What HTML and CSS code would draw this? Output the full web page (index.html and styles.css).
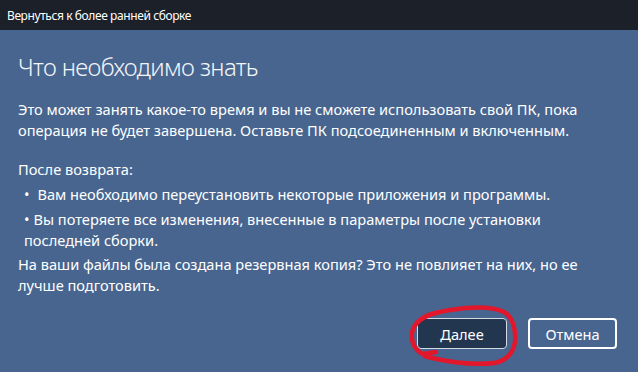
FILE: index.html
```html
<!DOCTYPE html>
<html>
<head>
    <title>Вернуться к более ранней сборке</title>
    <link rel="stylesheet" href="styles.css">
</head>
<body>
    <div id="window">
        <div class="titlebar">Вернуться к более ранней сборке</div>
        <div class="content">
            <h1>Что необходимо знать</h1>
            <div class="text">
                <p class="intro">Это может занять какое-то время и вы не сможете использовать свой ПК, пока операция не будет завершена. Оставьте ПК подсоединенным и включенным.</p>

                <p class="label">После возврата:</p>
                <ul class="notes">
                    <li class="first">Вам необходимо переустановить некоторые приложения и программы.</li>
                    <li class="second">Вы потеряете все изменения, внесенные в параметры после установки последней сборки.</li>
                </ul>
                <p class="backup">На ваши файлы была создана резервная копия? Это не повлияет на них, но ее лучше подготовить.</p>
            </div>

            <div class="actions">
                <div class="next-wrap">
                    <button type="button" class="btn primary">Далее</button>
                    <!-- red marker scribble over the button -->
                    <svg class="scribble" width="125" height="68" viewBox="0 0 125 68">
                        <path d="M36 52 C28 53 22 55 21 53 C13 48 10 38 13 29 C17 19 30 13 50 10 C70 7 92 6 104 12 C113 17 116 30 115 42 C113 54 106 61 94 63 C76 65 52 63 28 57 C24 56 23 55 26 55"
                              fill="none" stroke="#e3172b" stroke-width="4.5" stroke-linecap="round" stroke-linejoin="round"/>
                        <path d="M14 27 C20 17 28 14 40 12"
                              fill="none" stroke="#e3172b" stroke-width="4" stroke-linecap="round"/>
                    </svg>
                </div>
                <button type="button" class="btn">Отмена</button>
            </div>
        </div>
    </div>
</body>
</html>
```

FILE: styles.css
```css
body {
    margin: 0;
    padding: 0;
    font-family: "Noto Sans", "Liberation Sans", sans-serif;
    background-color: #47658f;
}

#window {
    width: 638px;
    height: 372px;
    overflow: hidden;
}

.titlebar {
    height: 30px;
    line-height: 31px;
    padding-left: 7px;
    background-color: #1c2028;
    color: #ffffff;
    font-size: 12px;
    letter-spacing: -0.4px;
}

.content {
    padding: 19px 0 0 18px;
    color: #ffffff;
}

h1 {
    margin: 0 0 14px 0;
    font-size: 24px;
    font-weight: 300;
    letter-spacing: -0.65px;
    line-height: 36px;
    color: #f3f5f8;
}

.text {
    width: 580px;
    font-size: 14.6px;
    line-height: 21px;
}

p {
    margin: 0;
}

.intro {
    margin-bottom: 18px;
}

.label {
    margin-bottom: 4px;
}

.notes {
    list-style: none;
    margin: 0;
    padding: 0 0 0 6px;
}

.notes li {
    margin-bottom: 4px;
}

.notes li.second {
    margin-bottom: 3px;
}

.notes li::before {
    content: "\2022";
}

.notes .first::before {
    margin-right: 8px;
}

.notes .second::before {
    margin-right: 4px;
}

.actions {
    display: flex;
    justify-content: flex-end;
    gap: 21px;
    margin-top: 22px;
    padding-right: 21px;
}

.next-wrap {
    position: relative;
}

.btn {
    width: 89px;
    height: 31px;
    border: 2px solid #ffffff;
    border-radius: 4px;
    background-color: transparent;
    color: #ffffff;
    font-family: inherit;
    font-size: 14.6px;
    box-sizing: border-box;
}

.btn.primary {
    width: 90px;
    background-color: #22364f;
    border: 1px solid #d5dbe3;
}

.scribble {
    position: absolute;
    left: -17px;
    top: -18px;
}
```
